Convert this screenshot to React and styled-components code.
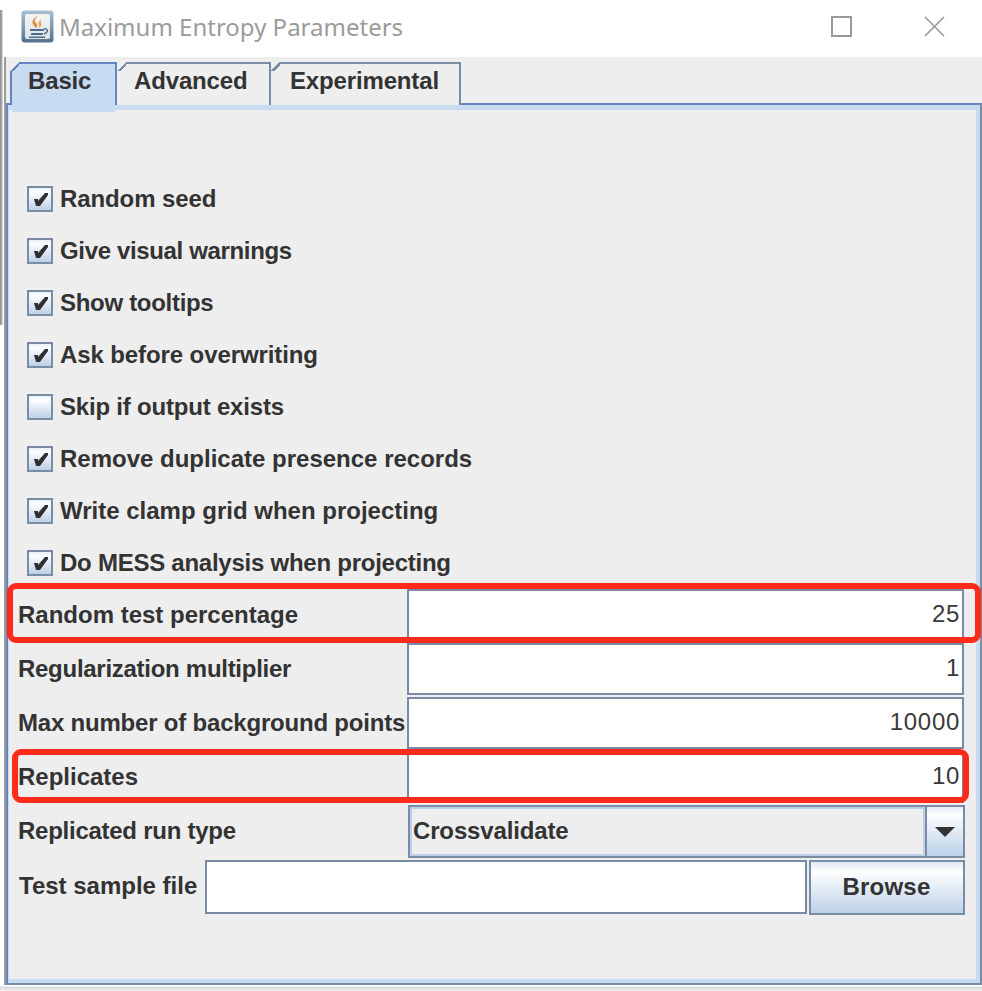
import React from "react";
import styled, { createGlobalStyle } from "styled-components";

const Global = createGlobalStyle`
  html, body { margin: 0; padding: 0; background: #fff; }
  * { box-sizing: border-box; }
`;

const Screen = styled.div`
  position: relative;
  width: 982px;
  height: 991px;
  overflow: hidden;
  background: linear-gradient(#fff 0, #fff 986px, #d8d8d8 987px, #f0f0f0 991px);
  font-family: "Liberation Sans", Arial, sans-serif;
  color: #333;
`;

const DesktopSliver = styled.div`
  position: absolute;
  left: 0;
  top: 10px;
  width: 3px;
  height: 315px;
  background: linear-gradient(90deg, #8a8a8a, #b5b5b5 70%, #fff);
`;

const Win = styled.div`
  margin-left: 4px;
  width: 978px;
  height: 985px;
  display: flex;
  flex-direction: column;
`;

const TitleBar = styled.div`
  height: 57px;
  background: #fff;
  display: flex;
  align-items: center;
  padding-left: 17px;
  flex: none;
`;

const AppIcon = styled.svg`
  width: 33px;
  height: 33px;
  flex: none;
  margin-top: -4px;
`;

const TitleText = styled.div`
  margin-left: 5px;
  margin-top: -4px;
  font-family: "Noto Sans", sans-serif;
  font-size: 24px;
  color: #9b9b9b;
  white-space: nowrap;
`;

const WinControls = styled.div`
  margin-left: auto;
  display: flex;
  align-items: center;
  gap: 72px;
  padding-right: 37px;
  margin-top: -5px;
`;

const WinGlyph = styled.svg`
  width: 21px;
  height: 21px;
  display: block;
`;

const Body = styled.div`
  flex: 1;
  background: #eee;
  border-left: 2px solid #9c9c9c;
  display: flex;
  flex-direction: column;
  min-height: 0;
`;

const TabStrip = styled.div`
  display: flex;
  height: 46px;
  padding: 5px 0 0 4px;
  flex: none;
  position: relative;
  z-index: 2;
`;

const Tab = styled.div`
  position: relative;
  width: ${(p) => p.$w}px;
  height: 43px;
  padding-left: ${(p) => p.$inset}px;
  padding-top: 1px;
  line-height: 32px;
  font-size: 24px;
  font-weight: 700;
  letter-spacing: -0.15px;
  white-space: nowrap;
  background: ${(p) => (p.$active ? "#c8dcf1" : "#eee")};
  border-top: 2px solid ${(p) => (p.$active ? "#6585c2" : "#7a8ca3")};
  border-right: 2px solid ${(p) => (p.$active ? "#6585c2" : "#7a8ca3")};
  border-left: ${(p) => (p.$active ? "2px solid #6585c2" : "none")};
  &::before {
    content: "";
    position: absolute;
    top: -2px;
    left: ${(p) => (p.$active ? -2 : 0)}px;
    width: 9px;
    height: 9px;
    background: linear-gradient(
      135deg,
      #eee 50%,
      ${(p) => (p.$active ? "#6585c2" : "#7a8ca3")} 50%,
      ${(p) => (p.$active ? "#6585c2" : "#7a8ca3")} 68%,
      ${(p) => (p.$active ? "#c8dcf1" : "#eee")} 68%
    );
  }
  &::after {
    content: "";
    display: ${(p) => (p.$active ? "block" : "none")};
    position: absolute;
    left: 0;
    right: 0;
    bottom: -7px;
    height: 7px;
    background: #c8dcf1;
  }
`;

const TabPanel = styled.div`
  flex: 1;
  min-height: 0;
  border-style: solid;
  border-width: 2px;
  border-color: #6585c2 #7a8ca3 #7a8ca3 #6585c2;
  position: relative;
`;

const PanelInner = styled.div`
  height: 100%;
  border-style: solid;
  border-color: #c8dcf1;
  border-width: 5px 4px 4px 1px;
  padding-top: 63px;
  background: #eee;
`;

const CheckRow = styled.label`
  height: 52px;
  display: flex;
  align-items: center;
  gap: 7px;
  padding-left: 18px;
  font-size: 24px;
  font-weight: 700;
  letter-spacing: ${(p) => p.$track}px;
  white-space: nowrap;
  line-height: 26px;
`;

const CheckBox = styled.span`
  width: 26px;
  height: 26px;
  flex: none;
  border: 2px solid #7a8ca3;
  background: linear-gradient(#e9f0f8 0, #fdfeff 18%, #bcd1e8 100%);
  display: flex;
  align-items: center;
  justify-content: center;
`;

const CheckMark = styled.svg`
  width: 18px;
  height: 18px;
  display: block;
`;

const Form = styled.div`
  display: flex;
  flex-direction: column;
  gap: 2px;
`;

const FieldRow = styled.div`
  height: 52px;
  display: grid;
  grid-template-columns: 398px 1fr;
  align-items: stretch;
  padding-right: 12px;
`;

const FieldLabel = styled.div`
  padding-left: 9px;
  font-size: 24px;
  font-weight: 700;
  letter-spacing: ${(p) => p.$track || 0}px;
  white-space: nowrap;
  display: flex;
  align-items: center;
  padding-bottom: 1px;
`;

const NumberField = styled.div`
  background: #fff;
  border: 2px solid #7a8ca3;
  display: flex;
  align-items: center;
  justify-content: flex-end;
  padding-right: 2px;
  font-size: 24px;
  font-weight: 400;
  letter-spacing: 0.7px;
  color: #3a3a3a;
  padding-bottom: 2px;
`;

const ComboRow = styled.div`
  height: 53px;
  display: grid;
  grid-template-columns: 399px 1fr;
  padding-right: 11px;
`;

const Combo = styled.div`
  display: flex;
  border: 2px solid #7a8ca3;
  background: #eee;
`;

const ComboValue = styled.div`
  flex: 1;
  border: 2px solid #bcd1e8;
  padding-left: 1px;
  font-size: 24px;
  font-weight: 700;
  letter-spacing: -0.15px;
  display: flex;
  align-items: center;
  padding-bottom: 2px;
`;

const ComboArrow = styled.div`
  width: 38px;
  flex: none;
  border-left: 2px solid #7a8ca3;
  background: linear-gradient(#e6eef7 0, #fdfeff 15%, #bcd1e8 100%);
  display: flex;
  align-items: center;
  justify-content: center;
`;

const ArrowGlyph = styled.svg`
  width: 20px;
  height: 10px;
  display: block;
`;

const FileRow = styled.div`
  height: 55px;
  display: flex;
  align-items: flex-start;
  padding-right: 10px;
`;

const FileLabel = styled(FieldLabel)`
  height: 52px;
  width: 196px;
  flex: none;
  padding-left: 10px;
`;

const FileField = styled.div`
  width: 602px;
  flex: none;
  height: 54px;
  background: #fff;
  border: 2px solid #7a8ca3;
`;

const BrowseButton = styled.div`
  width: 156px;
  height: 55px;
  margin-left: 2px;
  flex: none;
  border: 2px solid #7a8ca3;
  background: linear-gradient(#dfe9f4 0, #fdfeff 20%, #bcd1e8 100%);
  font-size: 24px;
  font-weight: 700;
  letter-spacing: 0.2px;
  display: flex;
  align-items: center;
  justify-content: center;
  padding-bottom: 2px;
  padding-right: 1px;
`;

const Callout = styled.div`
  position: absolute;
  left: ${(p) => p.$x}px;
  top: ${(p) => p.$y}px;
  width: ${(p) => p.$w}px;
  height: ${(p) => p.$h}px;
  border: 6px solid #ff2a1a;
  border-radius: 9px;
  pointer-events: none;
  z-index: 5;
`;

const checks = [
  ["Random seed", true, -0.1],
  ["Give visual warnings", true, -0.35],
  ["Show tooltips", true, -0.3],
  ["Ask before overwriting", true, -0.1],
  ["Skip if output exists", false, -0.2],
  ["Remove duplicate presence records", true, 0],
  ["Write clamp grid when projecting", true, 0],
  ["Do MESS analysis when projecting", true, -0.25],
];

const numbers = [
  ["Random test percentage", "25", 0],
  ["Regularization multiplier", "1", -0.28],
  ["Max number of background points", "10000", -0.2],
  ["Replicates", "10", 0],
];

const JavaIcon = () => (
  <AppIcon viewBox="0 0 33 33">
    <defs>
      <linearGradient id="frame" x1="0" y1="0" x2="0" y2="1">
        <stop offset="0" stopColor="#a9c0d4" />
        <stop offset="1" stopColor="#54718c" />
      </linearGradient>
      <linearGradient id="fill" x1="0" y1="0" x2="0" y2="1">
        <stop offset="0" stopColor="#f4f4f4" />
        <stop offset="1" stopColor="#dfe3e7" />
      </linearGradient>
    </defs>
    <rect x="0.5" y="0.5" width="32" height="32" rx="3" fill="url(#frame)" />
    <rect x="4" y="4" width="25" height="25" rx="2" fill="url(#fill)" />
    <path d="M18 5c-5 4-5 6-3 8 1 1 2 3 0 5-1-2-5-4-3-8 1-2 4-4 6-5z" fill="#e08a32" />
    <path d="M20 10c-3 2-3 3-2 5 0 1 0 2-1 3 3-1 4-3 3-5 0-1 0-2 0-3z" fill="#eea25a" />
    <path d="M9 19h14v2H9zM10 23h12v2H10zM8 26.5h16v1.5H8z" fill="#4d6f8d" />
    <path d="M23 19c4-1 5 3 0 5" fill="none" stroke="#4d6f8d" strokeWidth="1.5" />
  </AppIcon>
);

export default function App() {
  return (
    <Screen>
      <Global />
      <DesktopSliver />
      <Win>
        <TitleBar>
          <JavaIcon />
          <TitleText>Maximum Entropy Parameters</TitleText>
          <WinControls>
            <WinGlyph viewBox="0 0 21 21">
              <rect x="1" y="1" width="19" height="19" fill="none" stroke="#999" strokeWidth="2" />
            </WinGlyph>
            <WinGlyph viewBox="0 0 21 21">
              <path d="M1 1l19 19M20 1L1 20" fill="none" stroke="#999" strokeWidth="1.6" />
            </WinGlyph>
          </WinControls>
        </TitleBar>
        <Body>
          <TabStrip>
            <Tab $active $w={107} $inset={16}>Basic</Tab>
            <Tab $w={154} $inset={17}>Advanced</Tab>
            <Tab $w={190} $inset={19}>Experimental</Tab>
          </TabStrip>
          <TabPanel>
            <PanelInner>
              {checks.map(([text, on, track]) => (
                <CheckRow key={text} $track={track}>
                  <CheckBox>
                    {on && (
                      <CheckMark viewBox="0 0 18 18">
                        <path d="M3 9H7V11L14 3H17V5L9 16H5Z" fill="#2f2f2f" />
                      </CheckMark>
                    )}
                  </CheckBox>
                  {text}
                </CheckRow>
              ))}
              <Form>
                {numbers.map(([label, value, track]) => (
                  <FieldRow key={label}>
                    <FieldLabel $track={track}>{label}</FieldLabel>
                    <NumberField>{value}</NumberField>
                  </FieldRow>
                ))}
                <ComboRow>
                  <FieldLabel $track={-0.26}>Replicated run type</FieldLabel>
                  <Combo>
                    <ComboValue>Crossvalidate</ComboValue>
                    <ComboArrow>
                      <ArrowGlyph viewBox="0 0 20 10">
                        <path d="M0 0h20L10 10z" fill="#333" />
                      </ArrowGlyph>
                    </ComboArrow>
                  </Combo>
                </ComboRow>
                <FileRow>
                  <FileLabel>Test sample file</FileLabel>
                  <FileField />
                  <BrowseButton>Browse</BrowseButton>
                </FileRow>
              </Form>
            </PanelInner>
          </TabPanel>
        </Body>
      </Win>
      <Callout $x={7} $y={583} $w={974} $h={60} />
      <Callout $x={12} $y={749} $w={957} $h={54} />
    </Screen>
  );
}
